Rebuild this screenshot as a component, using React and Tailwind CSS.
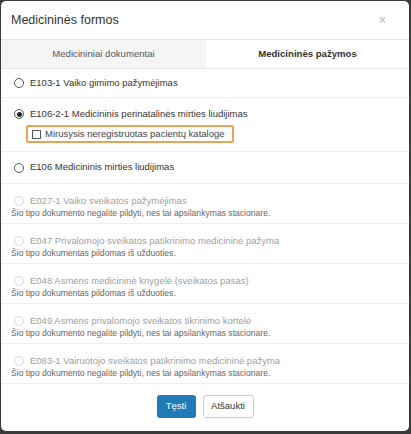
const ITEMS = [
  { code: 'E027-1 Vaiko sveikatos pažymėjimas',                     note: 'Šio tipo dokumento negalite pildyti, nes tai apsilankymas stacionare.' },
  { code: 'E047 Privalomojo sveikatos patikrinimo medicininė pažyma', note: 'Šio tipo dokumentas pildomas iš užduoties.' },
  { code: 'E048 Asmens medicininė knygelė (sveikatos pasas)',         note: 'Šio tipo dokumentas pildomas iš užduoties.' },
  { code: 'E049 Asmens privalomojo sveikatos tikrinimo kortelė',      note: 'Šio tipo dokumento negalite pildyti, nes tai apsilankymas stacionare.' },
  { code: 'E083-1 Vairuotojo sveikatos patikrinimo medicininė pažyma', note: 'Šio tipo dokumento negalite pildyti, nes tai apsilankymas stacionare.' },
];

function Radio({ checked, disabled }) {
  return (
    <span className={`flex h-[10px] w-[10px] flex-shrink-0 items-center justify-center rounded-full border ${
      disabled ? 'border-[#d8d8d8]' : 'border-[#555]'
    }`}>
      {checked && <span className="h-[5px] w-[5px] rounded-full bg-[#222]" />}
    </span>
  );
}

export default function App() {
  return (
    <div className="h-[434px] w-[411px] bg-[#3b3b3b] pl-[1px] pr-[2px] pt-[1px] pb-[3px]" style={{ fontFamily: '"Liberation Sans", Arial, sans-serif' }}>
      <div className="flex h-full flex-col overflow-hidden rounded-[5px] bg-white">

        <div className="flex h-[39px] items-center justify-between border-b border-[#e5e5e5] pl-[10px] pr-[23px]">
          <h1 className="text-[12.5px] text-[#333]">Medicininės formos</h1>
          <span className="text-[12px] font-bold leading-none text-[#c8c8c8]">×</span>
        </div>

        <div className="flex h-[29px] border-b border-[#e8e8e8] text-[9.6px]">
          <div className="flex w-[205px] items-center justify-center bg-[#f5f5f5] text-[#555]">Medicininiai dokumentai</div>
          <div className="flex flex-1 items-center justify-center font-bold text-[#333]">Medicininės pažymos</div>
        </div>

        <div className="flex h-[29px] items-center gap-[6px] border-b border-[#eee] pl-[13px] text-[9.5px] text-[#333]">
          <Radio />
          <span>E103-1 Vaiko gimimo pažymėjimas</span>
        </div>

        <div className="flex h-[54px] flex-col border-b border-[#eee] pl-[13px] pt-[10px] text-[9.5px] text-[#333]">
          <div className="flex h-[12px] items-center gap-[6px]">
            <Radio checked />
            <span>E106-2-1 Medicininis perinatalinės mirties liudijimas</span>
          </div>
          <div className="ml-[12px] mt-[5px] flex h-[18px] w-[208px] items-center gap-[4px] rounded-[2px] border-2 border-[#e8a25a] pl-[4px] text-[#444]">
            <span className="h-[9px] w-[9px] border border-[#555]" />
            <span>Mirusysis neregistruotas pacientų kataloge</span>
          </div>
        </div>

        <div className="flex h-[32px] items-center gap-[6px] border-b border-[#eee] pl-[13px] text-[9.5px] text-[#333]">
          <Radio />
          <span>E106 Medicininis mirties liudijimas</span>
        </div>

        {ITEMS.map(item => (
          <div key={item.code} className="flex h-[40px] flex-col border-b border-[#eee] pl-[10px] pt-[11px]">
            <div className="flex h-[12px] items-center gap-[6px] pl-[3px] text-[9.5px] text-[#a0a0a0]">
              <Radio disabled />
              <span>{item.code}</span>
            </div>
            <p className="text-[8.6px] leading-[12px] text-[#666]">{item.note}</p>
          </div>
        ))}

        <div className="flex flex-1 items-center justify-center gap-[7px] pb-[2px]">
          <button className="h-[23px] w-[39px] rounded-[3px] bg-[#1f7ab5] text-[9.5px] text-white">Tęsti</button>
          <button className="h-[23px] w-[51px] rounded-[3px] border border-[#ccc] bg-white text-[9.5px] text-[#333]">Atšaukti</button>
        </div>
      </div>
    </div>
  );
}
